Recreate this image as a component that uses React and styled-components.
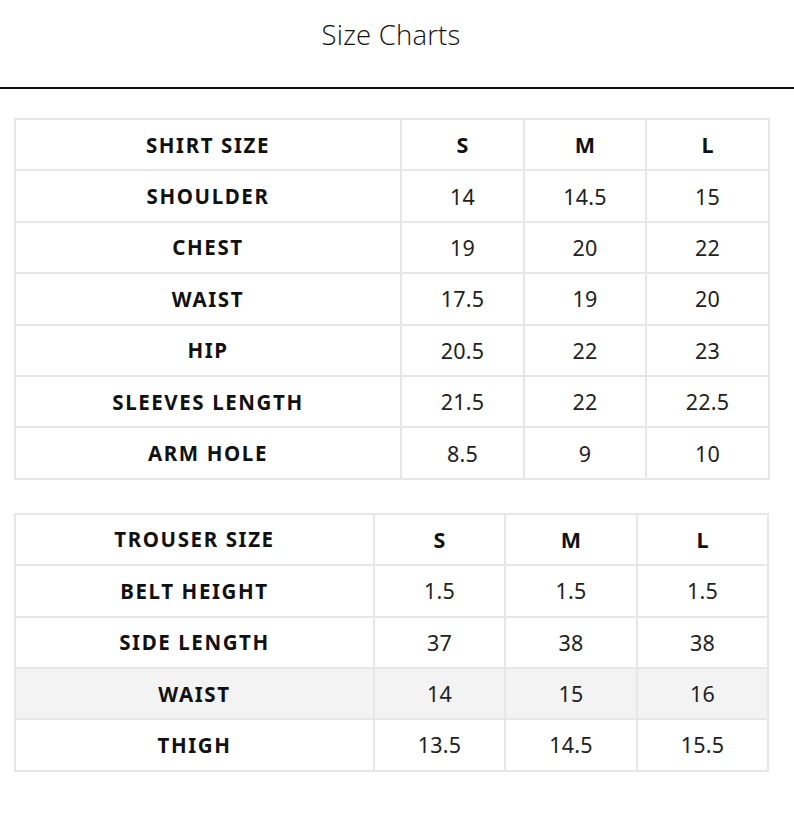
import React from "react"
import styled, { createGlobalStyle } from "styled-components"

const GlobalStyle = createGlobalStyle`
  body {
    margin: 0;
    background: #fff;
    font-family: "Noto Sans", "Open Sans", sans-serif;
    color: #1a1a1a;
  }
`

const Page = styled.div`
  width: 794px;
`

const Header = styled.header`
  height: 89px;
  border-bottom: 2px solid #111;
  box-sizing: border-box;
  display: flex;
  justify-content: center;
  padding: 16px 12px 0 0;
`

const Title = styled.h1`
  margin: 0;
  font-family: "Open Sans", "Noto Sans", sans-serif;
  font-weight: 300;
  font-size: 27.5px;
  letter-spacing: 0.2px;
  color: #111;
`

const Content = styled.div`
  padding: 29px 26px 0 14px;
  display: flex;
  flex-direction: column;
  gap: 33px;
`

const Table = styled.table`
  width: 100%;
  border-collapse: collapse;
  table-layout: fixed;
`

const Row = styled.tr`
  background: ${(p) => (p.$shaded ? "#f3f3f3" : "#fff")};
`

const Cell = styled.td`
  border: 2px solid #e7e7e7;
  height: 49.4px;
  padding: 0;
  text-align: center;
  vertical-align: middle;
  font-size: ${(p) => (p.$label ? "20.5px" : "21.5px")};
  font-weight: ${(p) => (p.$bold ? 700 : 400)};
  letter-spacing: ${(p) => (p.$label ? "1.6px" : "0.2px")};
  color: ${(p) => (p.$bold ? "#111" : "#222")};
`

const shirt = {
  widths: [386, 123, 122, 123],
  head: ["SHIRT SIZE", "S", "M", "L"],
  rows: [
    ["SHOULDER", "14", "14.5", "15"],
    ["CHEST", "19", "20", "22"],
    ["WAIST", "17.5", "19", "20"],
    ["HIP", "20.5", "22", "23"],
    ["SLEEVES LENGTH", "21.5", "22", "22.5"],
    ["ARM HOLE", "8.5", "9", "10"],
  ],
}

const trouser = {
  widths: [359, 131, 132, 131],
  head: ["TROUSER SIZE", "S", "M", "L"],
  rows: [
    ["BELT HEIGHT", "1.5", "1.5", "1.5"],
    ["SIDE LENGTH", "37", "38", "38"],
    ["WAIST", "14", "15", "16"],
    ["THIGH", "13.5", "14.5", "15.5"],
  ],
  shaded: 2,
}

function SizeTable({ chart }) {
  return (
    <Table>
      <colgroup>
        {chart.widths.map((w, i) => (
          <col key={i} style={{ width: w }} />
        ))}
      </colgroup>
      <tbody>
        <Row>
          {chart.head.map((h, i) => (
            <Cell key={i} $bold $label={i === 0}>
              {h}
            </Cell>
          ))}
        </Row>
        {chart.rows.map((r, ri) => (
          <Row key={ri} $shaded={chart.shaded === ri}>
            {r.map((c, i) => (
              <Cell key={i} $bold={i === 0} $label={i === 0}>
                {c}
              </Cell>
            ))}
          </Row>
        ))}
      </tbody>
    </Table>
  )
}

export default function App() {
  return (
    <Page>
      <GlobalStyle />
      <Header>
        <Title>Size Charts</Title>
      </Header>
      <Content>
        <SizeTable chart={shirt} />
        <SizeTable chart={trouser} />
      </Content>
    </Page>
  )
}
